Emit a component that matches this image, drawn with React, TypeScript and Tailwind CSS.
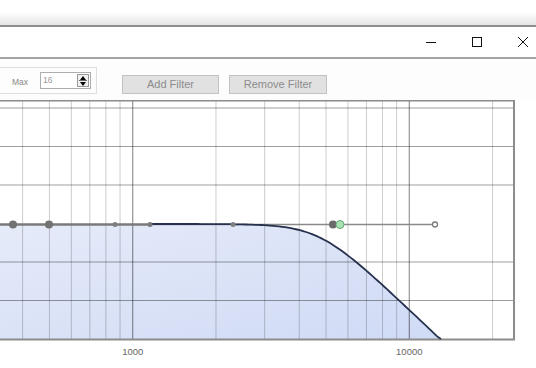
import React from "react";

// log-frequency axis: 1000 Hz sits at x=132.7, one decade spans 276.6px
const fx = (f: number) => 132.7 + 276.6 * Math.log10(f / 1000);

const minorFreqs = [400, 500, 600, 700, 800, 900, 2000, 3000, 4000, 5000, 6000, 7000, 8000, 9000, 20000];
const majorFreqs = [1000, 10000];
const hLines = [108, 146.5, 185, 262, 300.5];

const curveY = (x: number) => 224 + 19 * Math.log(1 + Math.exp((x - 319) / 20));

function buildCurve() {
  const pts: string[] = [];
  for (let x = 0; x <= 441; x += 3) {
    const y = Math.min(339, curveY(x));
    pts.push(`${x.toFixed(1)},${y.toFixed(1)}`);
  }
  return pts;
}

const curvePts = buildCurve();

function FilterChart() {
  const fillPoly = [...curvePts, "441,339", "0,339"].join(" ");
  const linePts = curvePts.filter((p) => parseFloat(p) >= 150).join(" ");

  return (
    <svg width="536" height="268" viewBox="0 100 536 268" className="block">
      <defs>
        <linearGradient id="fillGrad" x1="0" y1="0" x2="1" y2="1">
          <stop offset="0%" stopColor="#e6ebf9" />
          <stop offset="100%" stopColor="#cfdaf5" />
        </linearGradient>
      </defs>

      <rect x="0" y="100" width="514" height="239" fill="#ffffff" />
      <polygon points={fillPoly} fill="url(#fillGrad)" />

      {minorFreqs.map((f) => (
        <line key={f} x1={fx(f)} x2={fx(f)} y1="100" y2="339" stroke="#000" strokeOpacity="0.2" strokeWidth="1" />
      ))}
      {majorFreqs.map((f) => (
        <line key={f} x1={fx(f)} x2={fx(f)} y1="100" y2="339" stroke="#000" strokeOpacity="0.42" strokeWidth="1.2" />
      ))}
      {hLines.map((y) => (
        <line key={y} x1="0" x2="514" y1={y} y2={y} stroke="#000" strokeOpacity="0.38" strokeWidth="1" />
      ))}

      {/* plot frame */}
      <line x1="0" x2="515" y1="100.5" y2="100.5" stroke="#8c8c8c" strokeWidth="2" />
      <line x1="514" x2="514" y1="100" y2="340" stroke="#8c8c8c" strokeWidth="2" />
      <line x1="0" x2="515" y1="339.5" y2="339.5" stroke="#8c8c8c" strokeWidth="2" />

      {/* control line */}
      <line x1="0" x2="150" y1="224.5" y2="224.5" stroke="#7a7a7a" strokeWidth="2.5" />
      <line x1="150" x2="435" y1="224.5" y2="224.5" stroke="#8a8a8a" strokeWidth="1.5" />

      {/* response curve */}
      <polyline points={linePts} fill="none" stroke="#26314d" strokeWidth="1.8" strokeLinejoin="round" />

      {/* handles */}
      <circle cx="13" cy="224.5" r="4" fill="#727272" />
      <circle cx="49" cy="224.5" r="4" fill="#727272" />
      <circle cx="115" cy="224.5" r="2.5" fill="#808080" />
      <circle cx="150" cy="224.5" r="2.5" fill="#7a7a7a" />
      <circle cx="233" cy="224.5" r="2.5" fill="#808080" />
      <circle cx="333" cy="224.5" r="4" fill="#6a6a6a" />
      <circle cx="340" cy="224.5" r="4" fill="#a8e2b2" stroke="#68a874" strokeWidth="1" />
      <circle cx="435" cy="224.5" r="2.5" fill="#ffffff" stroke="#7a7a7a" strokeWidth="1.3" />

      <text x={fx(1000)} y="355" textAnchor="middle" fontSize="9.5" fill="#666" fontFamily="Liberation Sans, Arial, sans-serif">
        1000
      </text>
      <text x={fx(10000)} y="355" textAnchor="middle" fontSize="9.5" fill="#666" fontFamily="Liberation Sans, Arial, sans-serif">
        10000
      </text>
    </svg>
  );
}

function TitleButtons() {
  return (
    <div className="flex items-center h-full">
      <svg width="12" height="12" viewBox="0 0 12 12" className="ml-auto mr-[34px]">
        <line x1="1" x2="11" y1="6.5" y2="6.5" stroke="#111" strokeWidth="1" />
      </svg>
      <svg width="12" height="12" viewBox="0 0 12 12" className="mr-[34px]">
        <rect x="1.5" y="1.5" width="9" height="9" fill="none" stroke="#111" strokeWidth="1" />
      </svg>
      <svg width="12" height="12" viewBox="0 0 12 12" className="mr-[7px]">
        <path d="M1 1 L11 11 M11 1 L1 11" stroke="#111" strokeWidth="1" />
      </svg>
    </div>
  );
}

export default function App() {
  return (
    <div className="w-[536px] h-[368px] overflow-hidden bg-white flex flex-col font-['Liberation_Sans',Arial,sans-serif]">
      <div className="h-[27px] bg-gradient-to-b from-white via-white to-[#e5e5e5] border-b-2 border-[#8e8e8e] shrink-0" />
      <div className="h-[32px] bg-white border-b-2 border-[#a3a3a3] shrink-0">
        <TitleButtons />
      </div>
      <div className="h-[41px] bg-[#fdfdfd] flex items-start shrink-0">
        <div className="mt-[8px] h-[27px] w-[97px] border border-l-0 border-[#dedede] flex items-center">
          <span className="ml-[12px] text-[8.5px] text-[#888] mt-[3px]">Max</span>
          <div className="ml-[12px] h-[17px] w-[51px] border border-[#adadad] bg-white flex items-center">
            <span className="ml-[2px] text-[8.5px] text-[#999] leading-none">16</span>
            <div className="ml-auto mr-[1px] h-[13px] w-[12px] border border-[#999] bg-[#f0f0f0] flex flex-col items-center justify-center">
              <div className="w-0 h-0 border-l-[3px] border-r-[3px] border-b-[4px] border-l-transparent border-r-transparent border-b-black" />
              <div className="w-[8px] h-px bg-[#666] my-[0.5px]" />
              <div className="w-0 h-0 border-l-[3px] border-r-[3px] border-t-[4px] border-l-transparent border-r-transparent border-t-black" />
            </div>
          </div>
        </div>
        <button className="ml-[25px] mt-[16px] h-[19px] w-[97px] bg-[#e1e1e1] border border-[#c2c2c2] text-[11px] text-[#8c8c8c] leading-none">
          Add Filter
        </button>
        <button className="ml-[10px] mt-[16px] h-[19px] w-[98px] bg-[#e1e1e1] border border-[#c2c2c2] text-[11px] text-[#8c8c8c] leading-none">
          Remove Filter
        </button>
      </div>
      <FilterChart />
    </div>
  );
}
